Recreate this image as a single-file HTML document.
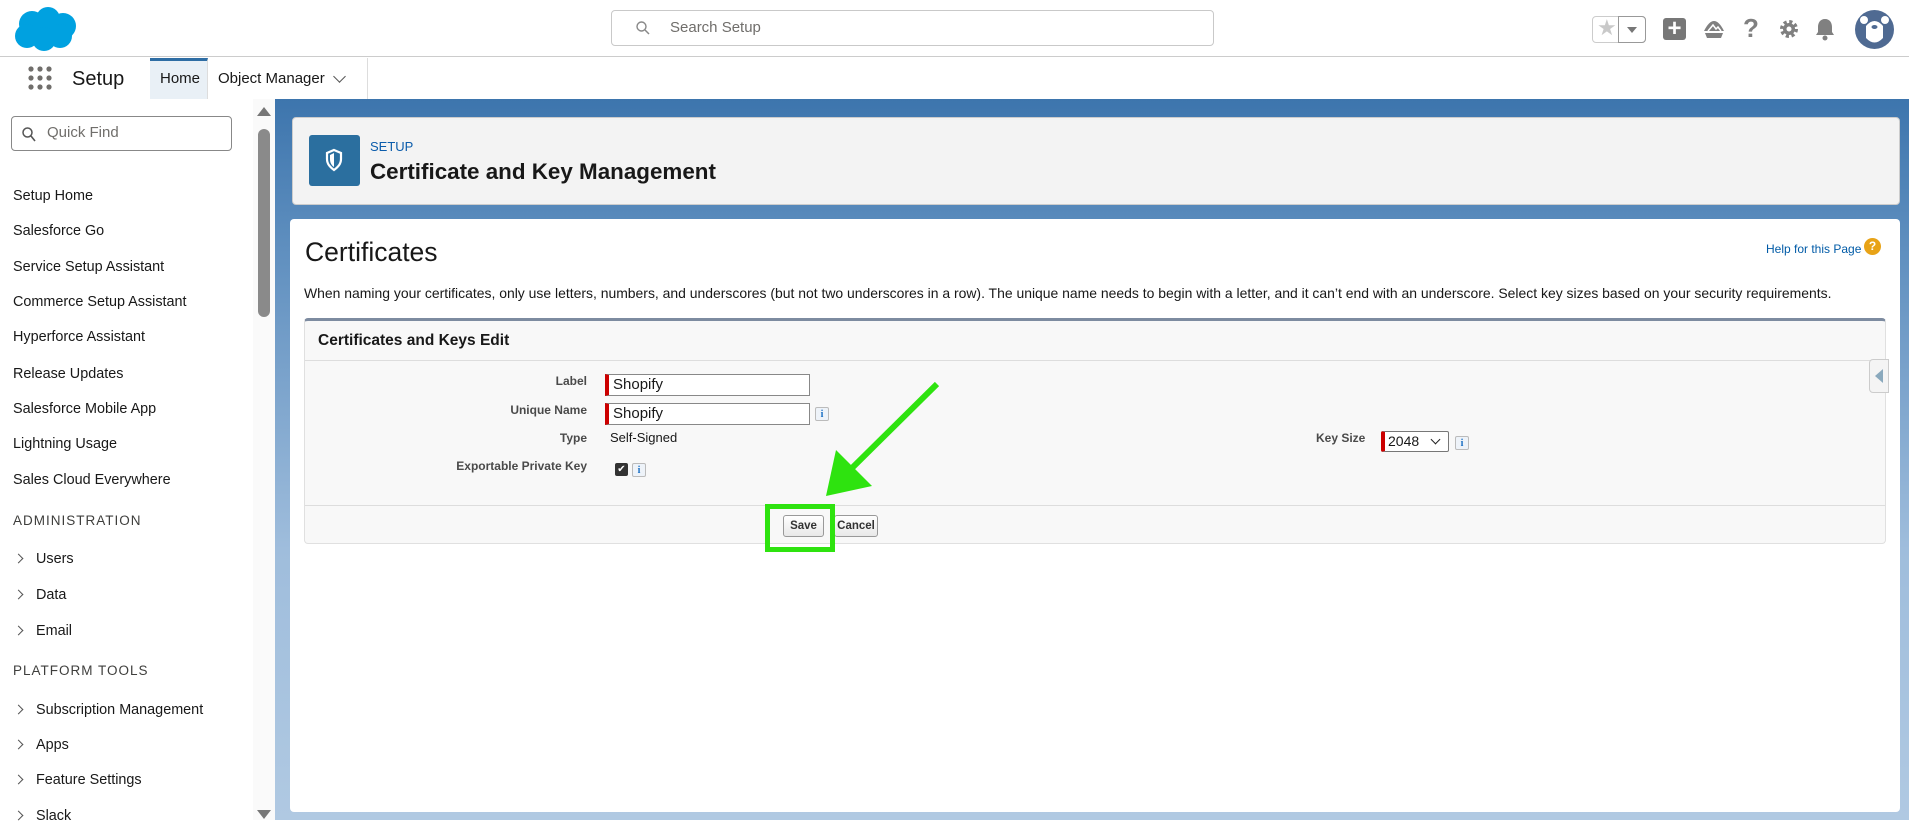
<!DOCTYPE html>
<html><head><meta charset="utf-8"><style>
*{box-sizing:border-box;margin:0;padding:0}
body{width:1909px;height:820px;overflow:hidden;position:relative;font-family:"Liberation Sans",Arial,sans-serif;background:#fff;color:#181818}
.a{position:absolute}
.side div.it{position:absolute;left:13px;font-size:14.4px;color:#181818}
.side div.sec{position:absolute;left:13px;font-size:13.5px;letter-spacing:1px;color:#3e3e3c}
.chev{display:inline-block;width:7px;height:7px;border-right:1.5px solid #555;border-top:1.5px solid #555;transform:rotate(45deg);margin-right:16px;position:relative;top:-1px;left:2px}
.lbl{position:absolute;font-size:12px;font-weight:bold;color:#4a4a4a;text-align:right;width:300px;left:287px}
.inp{position:absolute;height:22px;border:1px solid #888;border-left:4px solid #c00;font-size:15px;padding-left:4px;line-height:20px;background:#fff}
.info{position:absolute;width:14px;height:14px;border:1px solid #bbb;border-radius:2px;background:#eef3f9;color:#1a6fc4;font:bold 10px "Liberation Serif",serif;text-align:center;line-height:13px}
.btn{position:absolute;height:22px;border:1px solid #999;border-radius:3px;background:linear-gradient(#fff,#e8e8e8);font-size:11.5px;font-weight:bold;text-align:center;line-height:20px;color:#333}
</style></head><body>
<div class="a" style="left:0;top:0;width:1909px;height:57px;border-bottom:1px solid #ccc;background:#fff"></div>
<svg class="a" style="left:12px;top:6px" width="66" height="46" viewBox="0 0 66 46"><g fill="#00a1e0"><circle cx="20" cy="18" r="13"/><circle cx="36" cy="13" r="12"/><circle cx="51" cy="20" r="13"/><circle cx="15" cy="30" r="12"/><circle cx="32" cy="33" r="12"/><circle cx="48" cy="30" r="12"/></g></svg>
<div class="a" style="left:611px;top:10px;width:603px;height:36px;border:1px solid #c9c9c9;border-radius:4px"></div>
<svg class="a" style="left:636px;top:21px" width="14" height="14" viewBox="0 0 14 14"><circle cx="5.5" cy="5.5" r="4.5" stroke="#888" stroke-width="1.4" fill="none"/><path d="M9 9l4 4" stroke="#888" stroke-width="1.5"/></svg>
<div class="a" style="left:670px;top:19px;font-size:15px;color:#706e6b">Search Setup</div>
<div class="a" style="left:1592px;top:16px;width:54px;height:27px;border:1px solid #ccc;border-radius:4px"></div>
<div class="a" style="left:1618px;top:16px;width:28px;height:27px;border:1px solid #999;border-radius:0 4px 4px 0"></div>
<div class="a" style="left:1597px;top:15px;font-size:22px;color:#c9c9c9">★</div>
<div class="a" style="left:1627px;top:27px;border-left:5px solid transparent;border-right:5px solid transparent;border-top:6px solid #777"></div>
<div class="a" style="left:1663px;top:18px;width:23px;height:22px;background:#777;border-radius:3px;color:#fff;font-size:24px;font-weight:bold;text-align:center;line-height:22px">+</div>
<svg class="a" style="left:1702px;top:17px" width="24" height="22" viewBox="0 0 24 22"><path d="M2 14 Q12 -6 22 14 Z" fill="#808080"/><path d="M3 16h18l-2 5H5z" fill="#808080"/><path d="M6 14l5-6 3 4 2-2 3 4" stroke="#fff" stroke-width="1.5" fill="none"/></svg>
<div class="a" style="left:1743px;top:13px;font-size:26px;font-weight:bold;color:#808080">?</div>
<svg class="a" style="left:1778px;top:18px" width="22" height="22" viewBox="0 0 22 22"><circle cx="11" cy="11" r="7" fill="none" stroke="#808080" stroke-width="4" stroke-dasharray="3 2.5"/><circle cx="11" cy="11" r="6" fill="#808080"/><circle cx="11" cy="11" r="2.5" fill="#fff"/></svg>
<svg class="a" style="left:1814px;top:17px" width="22" height="24" viewBox="0 0 22 24"><path d="M11 2c-5 0-7 4-7 8v5l-2 3h18l-2-3v-5c0-4-2-8-7-8z" fill="#808080"/><circle cx="11" cy="21" r="2.5" fill="#808080"/></svg>
<svg class="a" style="left:1855px;top:10px" width="39" height="39" viewBox="0 0 39 39"><circle cx="19.5" cy="19.5" r="19.5" fill="#4f6a92"/><circle cx="9" cy="10" r="4" fill="#fff"/><circle cx="30" cy="10" r="4" fill="#fff"/><path d="M11 16q8.5-10 17 0v12q-8.5 9-17 0z" fill="#fff"/><ellipse cx="19.5" cy="17" rx="3" ry="2" fill="#4f6a92"/></svg>
<div class="a" style="left:0;top:57px;width:1909px;height:42px;background:#fff"></div>
<svg class="a" style="left:28px;top:66px" width="24" height="24" viewBox="0 0 24 24"><g fill="#706e6b"><circle cx="3" cy="3" r="2.6"/><circle cx="12" cy="3" r="2.6"/><circle cx="21" cy="3" r="2.6"/><circle cx="3" cy="12" r="2.6"/><circle cx="12" cy="12" r="2.6"/><circle cx="21" cy="12" r="2.6"/><circle cx="3" cy="21" r="2.6"/><circle cx="12" cy="21" r="2.6"/><circle cx="21" cy="21" r="2.6"/></g></svg>
<div class="a" style="left:72px;top:68px;font-size:20px">Setup</div>
<div class="a" style="left:150px;top:58px;width:58px;height:41px;background:#e9f0f6;border-top:3px solid #2e6da4;border-right:1px solid #ddd"></div>
<div class="a" style="left:160px;top:70px;font-size:15px">Home</div>
<div class="a" style="left:218px;top:70px;font-size:15px">Object Manager</div>
<div class="a" style="left:335px;top:72px;width:9px;height:9px;border-right:1.5px solid #555;border-bottom:1.5px solid #555;transform:rotate(45deg)"></div>
<div class="a" style="left:367px;top:58px;width:1px;height:41px;background:#ddd"></div>
<div class="a" style="left:0;top:99px;width:1909px;height:721px;background:linear-gradient(#3d75ad 0px,#5f8fbf 150px,#9fbddc 450px,#b0c9e2 721px)"></div>
<div class="a side" style="left:0;top:99px;width:253px;height:721px;background:#fff">
<div class="a" style="left:11px;top:17px;width:221px;height:35px;border:1px solid #888;border-radius:4px"></div>
<svg class="a" style="left:22px;top:28px" width="14" height="15" viewBox="0 0 14 15"><circle cx="5.5" cy="5.5" r="4.5" stroke="#555" stroke-width="1.5" fill="none"/><path d="M9 9l4 5" stroke="#555" stroke-width="1.6"/></svg>
<div class="a" style="left:47px;top:25px;font-size:15px;color:#706e6b">Quick Find</div>
<div class="it" style="top:89px">Setup Home</div>
<div class="it" style="top:124px">Salesforce Go</div>
<div class="it" style="top:160px">Service Setup Assistant</div>
<div class="it" style="top:195px">Commerce Setup Assistant</div>
<div class="it" style="top:230px">Hyperforce Assistant</div>
<div class="it" style="top:267px">Release Updates</div>
<div class="it" style="top:302px">Salesforce Mobile App</div>
<div class="it" style="top:337px">Lightning Usage</div>
<div class="it" style="top:373px">Sales Cloud Everywhere</div>
<div class="sec" style="top:414px">ADMINISTRATION</div>
<div class="it" style="top:452px"><span class="chev"></span>Users</div>
<div class="it" style="top:488px"><span class="chev"></span>Data</div>
<div class="it" style="top:524px"><span class="chev"></span>Email</div>
<div class="sec" style="top:564px">PLATFORM TOOLS</div>
<div class="it" style="top:603px"><span class="chev"></span>Subscription Management</div>
<div class="it" style="top:638px"><span class="chev"></span>Apps</div>
<div class="it" style="top:673px"><span class="chev"></span>Feature Settings</div>
<div class="it" style="top:709px"><span class="chev"></span>Slack</div>
</div>
<div class="a" style="left:253px;top:99px;width:22px;height:721px;background:#fafafa"></div>
<div class="a" style="left:257px;top:107px;border-left:7px solid transparent;border-right:7px solid transparent;border-bottom:9px solid #777"></div>
<div class="a" style="left:258px;top:129px;width:12px;height:188px;background:#8a8a8a;border-radius:6px"></div>
<div class="a" style="left:257px;top:810px;border-left:7px solid transparent;border-right:7px solid transparent;border-top:9px solid #777"></div>
<div class="a" style="left:292px;top:117px;width:1608px;height:88px;background:#f3f3f3;border:1px solid #ccc;border-radius:4px"></div>
<div class="a" style="left:309px;top:135px;width:51px;height:51px;background:#2b6f9f;border-radius:3px"></div>
<svg class="a" style="left:324px;top:148px" width="20" height="24" viewBox="0 0 20 24"><path d="M10 2l7 3v6c0 5-3 8-7 11-4-3-7-6-7-11V5z" fill="none" stroke="#fff" stroke-width="2.2"/><path d="M10 5v14c-3-2-4-5-4-8V7z" fill="#fff"/></svg>
<div class="a" style="left:370px;top:139px;font-size:13px;color:#0b5cab">SETUP</div>
<div class="a" style="left:370px;top:159px;font-size:22.4px;font-weight:bold">Certificate and Key Management</div>
<div class="a" style="left:290px;top:219px;width:1610px;height:593px;background:#fff;border-radius:4px"></div>
<div class="a" style="left:305px;top:237px;font-size:26.5px">Certificates</div>
<div class="a" style="left:1766px;top:242px;font-size:12px;color:#015ba7">Help for this Page</div>
<div class="a" style="left:1864px;top:238px;width:17px;height:17px;border-radius:50%;background:#e8a317;color:#fff;font-size:12px;font-weight:bold;text-align:center;line-height:17px">?</div>
<div class="a" style="left:304px;top:285px;font-size:13.95px;white-space:nowrap">When naming your certificates, only use letters, numbers, and underscores (but not two underscores in a row). The unique name needs to begin with a letter, and it can’t end with an underscore. Select key sizes based on your security requirements.</div>
<div class="a" style="left:304px;top:318px;width:1582px;height:226px;background:#f8f8f8;border:1px solid #e0e0e0;border-top:3px solid #7d8ba0;border-radius:4px"></div>
<div class="a" style="left:318px;top:332px;font-size:15.5px;font-weight:bold">Certificates and Keys Edit</div>
<div class="a" style="left:305px;top:360px;width:1580px;height:1px;background:#ddd"></div>
<div class="lbl" style="top:374px">Label</div>
<div class="inp" style="left:605px;top:374px;width:205px">Shopify</div>
<div class="lbl" style="top:403px">Unique Name</div>
<div class="inp" style="left:605px;top:403px;width:205px">Shopify</div>
<div class="info" style="left:815px;top:407px">i</div>
<div class="lbl" style="top:431px">Type</div>
<div class="a" style="left:610px;top:430px;font-size:13px">Self-Signed</div>
<div class="lbl" style="top:459px">Exportable Private Key</div>
<div class="a" style="left:615px;top:463px;width:13px;height:13px;background:#333;border-radius:2px;color:#fff;font-size:10px;text-align:center;line-height:13px">✔</div>
<div class="info" style="left:632px;top:463px">i</div>
<div class="a" style="left:1316px;top:431px;font-size:12px;font-weight:bold;color:#4a4a4a">Key Size</div>
<div class="a" style="left:1381px;top:431px;width:68px;height:21px;border:1px solid #777;border-left:4px solid #c00;border-radius:2px;background:#fff;font-size:14px;padding-left:3px;line-height:19px">2048</div>
<div class="a" style="left:1432px;top:436px;width:7px;height:7px;border-right:1.5px solid #222;border-bottom:1.5px solid #222;transform:rotate(45deg)"></div>
<div class="info" style="left:1455px;top:436px">i</div>
<div class="a" style="left:305px;top:505px;width:1580px;height:1px;background:#ddd"></div>
<div class="btn" style="left:783px;top:515px;width:41px">Save</div>
<div class="btn" style="left:834px;top:515px;width:44px">Cancel</div>
<div class="a" style="left:765px;top:504px;width:70px;height:48px;border:5px solid #2ee30f"></div>
<svg class="a" style="left:800px;top:370px" width="150" height="140" viewBox="0 0 150 140"><path d="M137 14 L50 100" stroke="#2ee30f" stroke-width="6"/><path d="M26 126 L36 80 L72 116 Z" fill="#2ee30f"/></svg>
<div class="a" style="left:1869px;top:359px;width:20px;height:34px;background:#f4f4f4;border:1px solid #ccc;border-radius:4px 0 0 4px"></div>
<div class="a" style="left:1875px;top:369px;border-top:7px solid transparent;border-bottom:7px solid transparent;border-right:8px solid #8aa9bd"></div>
</body></html>
